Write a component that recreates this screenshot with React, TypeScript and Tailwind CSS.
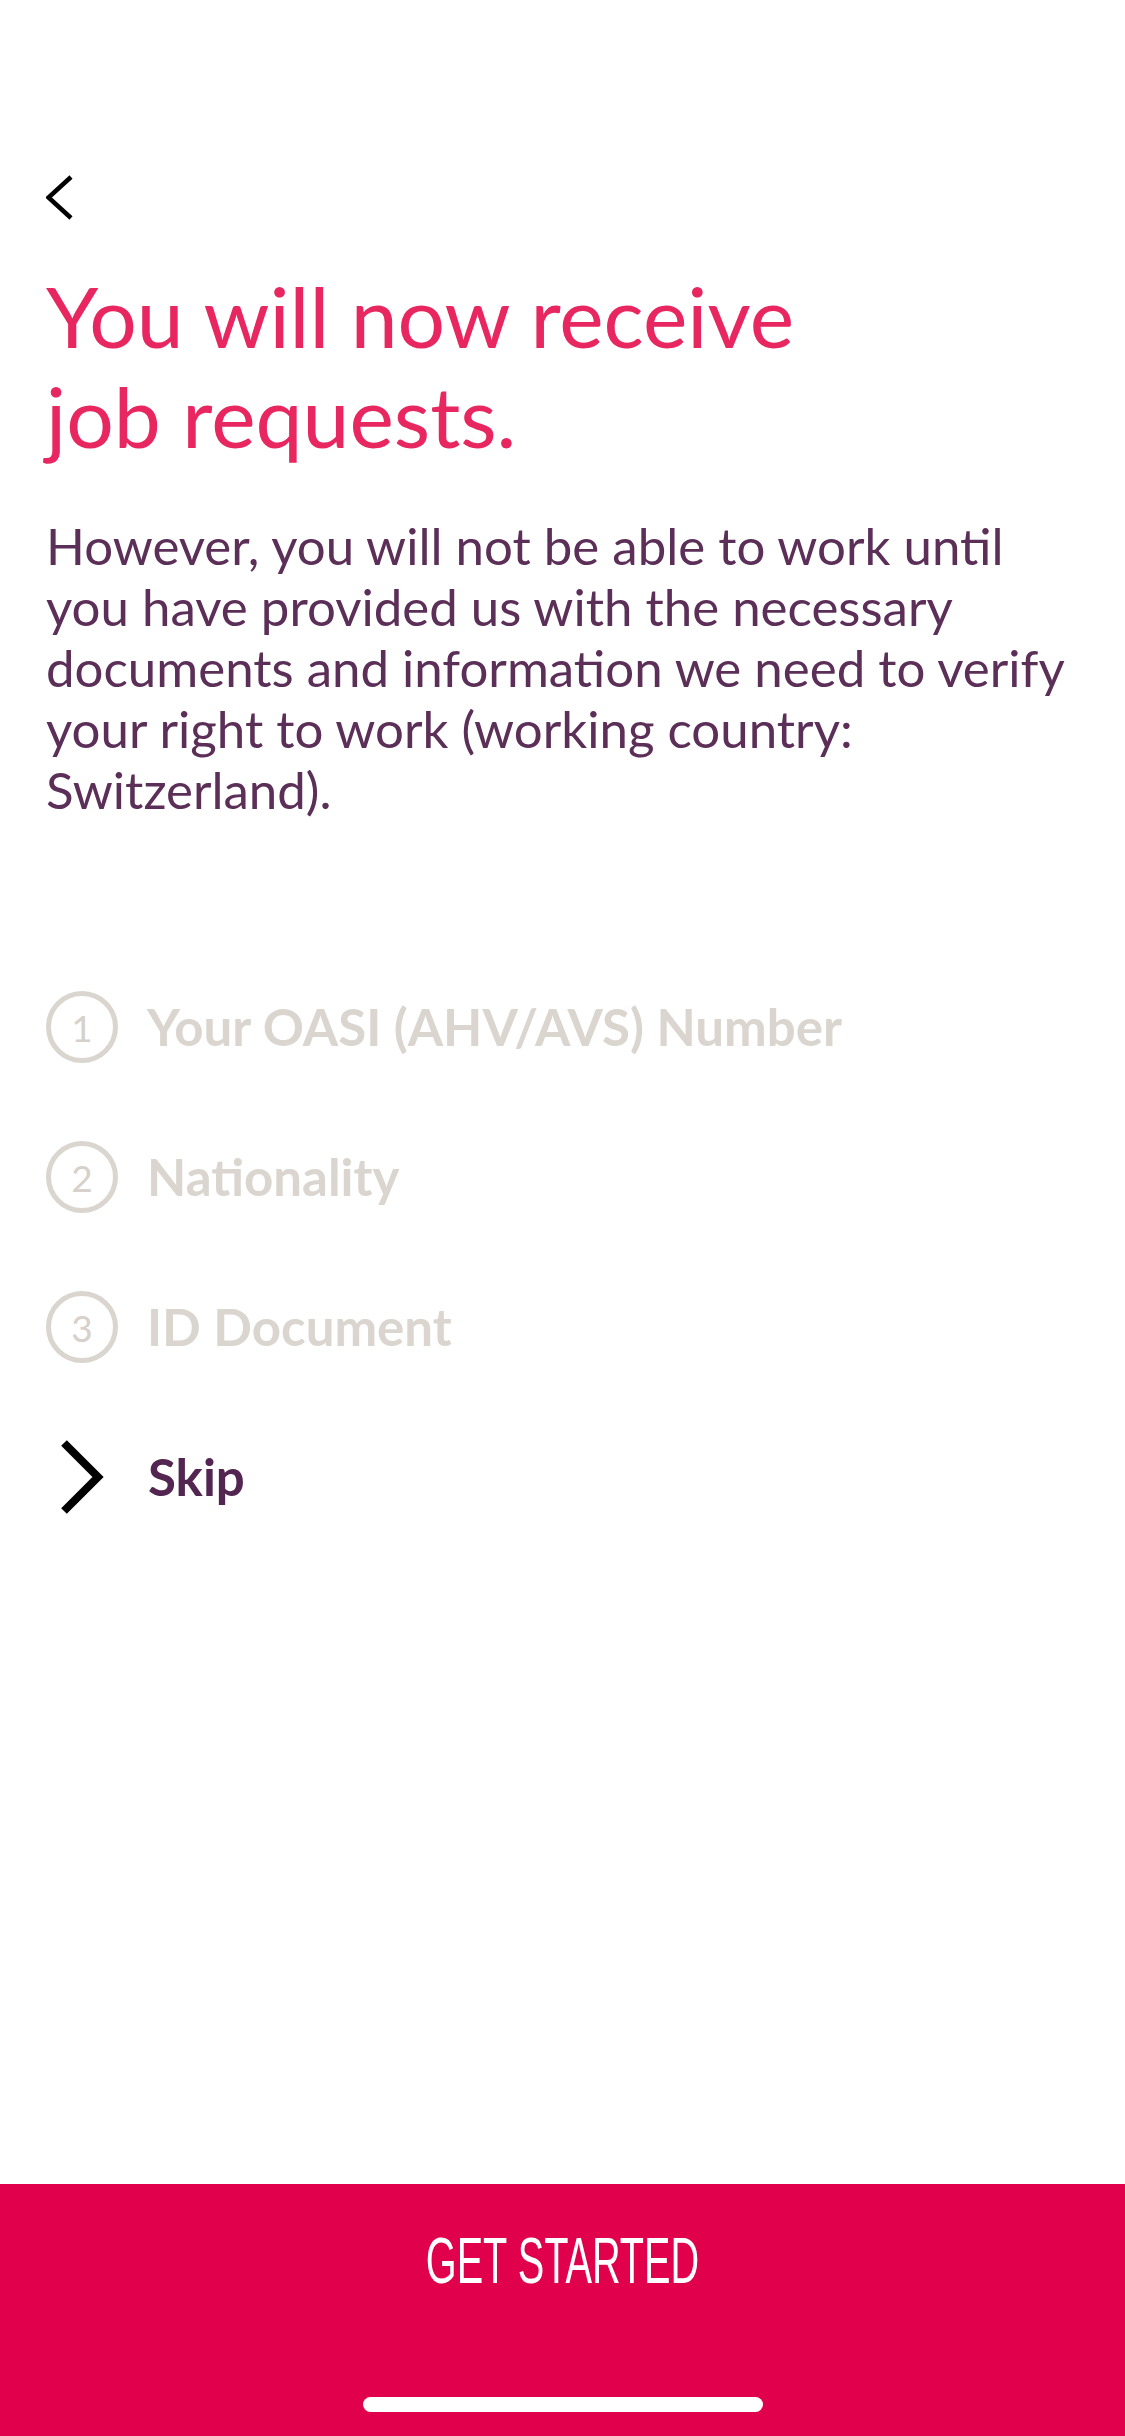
import React from "react";

const steps = [
  { n: "1", label: "Your OASI (AHV/AVS) Number" },
  { n: "2", label: "Nationality" },
  { n: "3", label: "ID Document" },
];

export default function App() {
  return (
    <div
      className="flex h-[2436px] w-[1125px] flex-col bg-white"
      style={{ fontFamily: "Lato, 'Noto Sans', sans-serif" }}
    >
      <div className="flex flex-1 flex-col pl-[46px] pr-[50px] pt-[175px]">
        <svg width="30" height="46" viewBox="0 0 30 46" fill="none">
          <path d="M25 2 L2.5 22.5 L25 43" stroke="#000" strokeWidth="4.5" strokeLinejoin="miter" />
        </svg>
        <h1 className="mt-[45px] text-[84px] font-normal leading-[100px] text-[#e8265f]">
          You will now receive
          <br />
          job requests.
        </h1>
        <p className="mt-[49px] text-[51px] leading-[61px] text-[#5b2f57]">
          However, you will not be able to work until you have provided us with the necessary
          documents and information we need to verify your right to work (working country:
          Switzerland).
        </p>
        <div className="mt-[132px] flex flex-col">
          {steps.map((s) => (
            <div key={s.n} className="flex h-[150px] items-center">
              <div className="flex h-[72px] w-[72px] shrink-0 items-center justify-center rounded-full border-[5px] border-[#dad5cf] text-[37px] leading-none text-[#d6d1cb]">
                {s.n}
              </div>
              <span className="ml-[29px] text-[51px] font-bold text-[#dad5cf]">{s.label}</span>
            </div>
          ))}
          <div className="flex h-[150px] items-center">
            <svg width="46" height="74" viewBox="0 0 46 74" fill="none" className="ml-[14px] shrink-0">
              <path d="M4 3 L38 37 L4 71" stroke="#000" strokeWidth="8" strokeLinejoin="miter" />
            </svg>
            <span className="ml-[42px] text-[51px] font-bold text-[#522650]">Skip</span>
          </div>
        </div>
      </div>
      <div className="flex h-[252px] flex-col items-center bg-[#e0004c] pt-[45px]">
        <span
          className="inline-block scale-x-[0.62] text-[64px] leading-[64px] text-white"
          style={{ fontFamily: "'Liberation Sans', Arial, sans-serif" }}
        >
          GET STARTED
        </span>
        <div className="mt-[104px] h-[15px] w-[400px] rounded-full bg-white" />
      </div>
    </div>
  );
}
